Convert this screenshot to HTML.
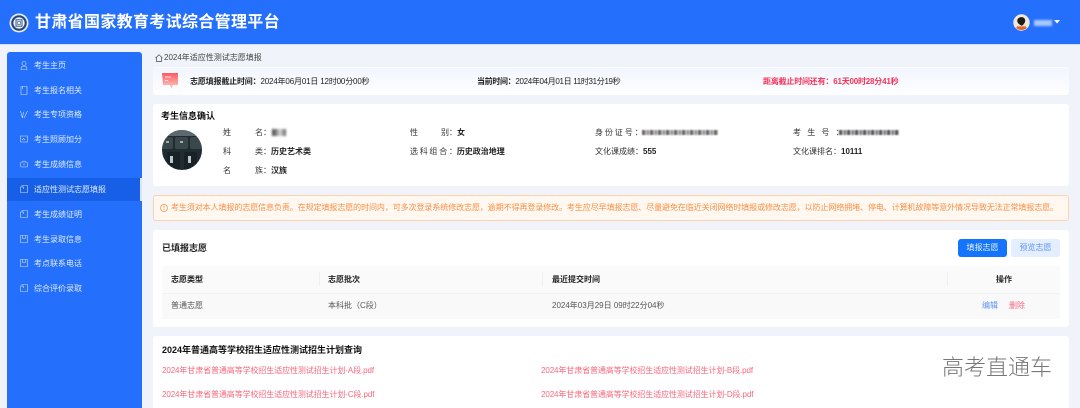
<!DOCTYPE html>
<html lang="zh-CN"><head><meta charset="utf-8"><title>甘肃省国家教育考试综合管理平台</title>
<style>
*{margin:0;padding:0;box-sizing:border-box}
html,body{width:1080px;height:408px;overflow:hidden;background:#f0f3f9;font-family:"Liberation Sans","Noto Sans CJK SC",sans-serif;font-size:8px;color:#333}
#p{position:relative;width:1080px;height:408px;overflow:hidden}
.a{position:absolute;white-space:nowrap;line-height:12px}
.box{position:absolute;background:#fff;border-radius:3px}
.b{font-weight:700;color:#222}
.m{color:#dfeaff;font-size:8px}
.blur{position:absolute;filter:blur(1px)}
svg{position:absolute;overflow:visible}
</style></head><body><div id="p">
<div class="box" style="left:0;top:0;width:1080px;height:44px;background:#2470fd;border-radius:0"></div>
<div class="box" style="left:0;top:44px;width:1080px;height:1px;background:#cfe0ff;border-radius:0"></div>
<svg style="left:9px;top:13px" width="20" height="20" viewBox="0 0 20 20"><circle cx="10" cy="10" r="9.500" fill="#e6ecf5"/><circle cx="10" cy="10" r="7.800" fill="#24457f"/><circle cx="10" cy="10" r="5.600" fill="#f1f4f9"/><rect x="7" y="6.800" width="6" height="6.400" fill="none" stroke="#24457f" stroke-width=".9"/><rect x="8.600" y="8.600" width="2.800" height="2.800" fill="none" stroke="#24457f" stroke-width=".6"/></svg>
<div class="a" style="left:35px;top:13px;font-size:16px;line-height:20px;font-weight:700;color:#fff;letter-spacing:.33px">甘肃省国家教育考试综合管理平台</div>
<svg style="left:1013px;top:14px" width="17" height="17" viewBox="0 0 17 17"><circle cx="8.500" cy="8.500" r="8.200" fill="#f1e8d8"/><path d="M3.200 14a8 8 0 0 0 10.600 0l-1-1.600H4.200z" fill="#e2672e"/><path d="M4.500 5.500c1-2.500 5-3 6.500-1.500 1.500 1 1.500 3.500.5 5-1 1.200-1.500 2.500-3 2.800-1-1-3-1.300-3.500-3-.8-.6-1-2-.5-3.300z" fill="#1e1a17"/></svg>
<div class="blur" style="left:1034px;top:20px;width:18px;height:6px;background:#a9c8ff"></div>
<svg style="left:1054px;top:20px" width="6" height="4"><path d="M0 0h6L3 3.500z" fill="#fff"/></svg>

<div class="box" style="left:7px;top:52px;width:135px;height:356px;background:#2470fd;border-radius:3px 3px 0 0"></div>
<div class="box" style="left:7px;top:178px;width:135px;height:23px;background:#175fe6;border-radius:0"></div>
<div class="box" style="left:140px;top:178px;width:2px;height:23px;background:#dbe7ff;border-radius:0"></div>
<svg style="left:20px;top:61px" width="8" height="9" viewBox="0 0 8 9" fill="none" stroke="#cfe0ff" stroke-width=".6"><circle cx="4" cy="2.500" r="2"/><path d="M1 8.500l.8-3h4.400l.8 3z"/></svg>
<svg style="left:20px;top:86px" width="8" height="9" viewBox="0 0 8 9" fill="none" stroke="#cfe0ff" stroke-width=".6"><path d="M1 .5h6v8H1zM2.500.5v2.500"/></svg>
<svg style="left:20px;top:110px" width="8" height="9" viewBox="0 0 8 9" fill="none" stroke="#cfe0ff" stroke-width=".6"><path d="M.5 1l2 7 1-6M4 8l3.500-7"/></svg>
<svg style="left:20px;top:135px" width="8" height="8" viewBox="0 0 8 8" fill="none" stroke="#cfe0ff" stroke-width=".6"><path d="M.5 1h7v6h-7zM2 5l1.500-1.500L5 5"/></svg>
<svg style="left:20px;top:160px" width="8" height="8" viewBox="0 0 8 8" fill="none" stroke="#cfe0ff" stroke-width=".6"><rect x=".5" y="2" width="7" height="5" rx="1.500"/><path d="M3 2V.8M5 2V.8M4 3.500v2"/></svg>
<svg style="left:20px;top:185px" width="8" height="8" viewBox="0 0 8 8" fill="none" stroke="#cfe0ff" stroke-width=".6"><path d="M2 2V.5h5.500v7H.5V2h3v2"/></svg>
<svg style="left:20px;top:210px" width="8" height="8" viewBox="0 0 8 8" fill="none" stroke="#cfe0ff" stroke-width=".6"><path d="M2 2V.5h5.500v7H.5V2h3v2"/></svg>
<svg style="left:20px;top:235px" width="8" height="8" viewBox="0 0 8 8" fill="none" stroke="#cfe0ff" stroke-width=".6"><path d="M.5.5h7v7h-7zM2.500.5v3h3v-3"/></svg>
<svg style="left:20px;top:259px" width="8" height="8" viewBox="0 0 8 8" fill="none" stroke="#cfe0ff" stroke-width=".6"><path d="M.5.5h7v7h-7zM2.500.5v3h3v-3"/></svg>
<svg style="left:20px;top:284px" width="8" height="8" viewBox="0 0 8 8" fill="none" stroke="#cfe0ff" stroke-width=".6"><path d="M2 2V.5h5.500v7H.5V2h3v2"/></svg>
<div class="a m" style="left:34px;top:60px">考生主页</div>
<div class="a m" style="left:34px;top:85px">考生报名相关</div>
<div class="a m" style="left:34px;top:109px">考生专项资格</div>
<div class="a m" style="left:34px;top:134px">考生照顾加分</div>
<div class="a m" style="left:34px;top:159px">考生成绩信息</div>
<div class="a m" style="left:34px;top:184px">适应性测试志愿填报</div>
<div class="a m" style="left:34px;top:209px">考生成绩证明</div>
<div class="a m" style="left:34px;top:234px">考生录取信息</div>
<div class="a m" style="left:34px;top:258px">考点联系电话</div>
<div class="a m" style="left:34px;top:283px">综合评价录取</div>

<svg style="left:155px;top:54px" width="8" height="8" viewBox="0 0 8 8" fill="none" stroke="#444" stroke-width=".7"><path d="M.5 4L4 .8 7.500 4M1.500 3.500v4h5v-4"/></svg>
<div class="a" style="left:164px;top:52px;color:#444">2024年适应性测试志愿填报</div>

<div class="box" style="left:153px;top:67px;width:916px;height:28px;background:linear-gradient(#f1f5fe,#fff);border-top:1px solid #fbfcff"></div>
<svg style="left:161px;top:73px" width="18" height="17" viewBox="0 0 18 17"><defs><linearGradient id="g" x1="0" y1="0" x2="0" y2="1"><stop offset="0" stop-color="#fb5a5f"/><stop offset="1" stop-color="#ffd0c8"/></linearGradient></defs><path d="M1 0h16v12h-5l-1.500 4-1.500-4H2z" fill="url(#g)"/><path d="M4 4h6M4 7.500h3" stroke="#fff" stroke-width=".8"/></svg>
<div class="a" style="left:190px;top:76px;color:#222;letter-spacing:-.17px"><b>志愿填报截止时间：</b>2024年06月01日 12时00分00秒</div>
<div class="a" style="left:477px;top:76px;color:#222;letter-spacing:-.33px"><b>当前时间：</b>2024年04月01日 11时31分19秒</div>
<div class="a" style="left:763px;top:76px;color:#f5315a;font-weight:700;letter-spacing:-.2px">距离截止时间还有：61天00时28分41秒</div>

<div class="box" style="left:153px;top:104px;width:916px;height:82px"></div>
<div class="a b" style="left:161px;top:110px;font-size:9px;color:#111">考生信息确认</div>
<svg style="left:162px;top:130px" width="40" height="40" viewBox="0 0 40 40"><defs><clipPath id="c"><circle cx="20" cy="20" r="20"/></clipPath></defs><g clip-path="url(#c)"><rect width="40" height="40" fill="#1f2c31"/><rect width="40" height="6" fill="#5c6a6e"/><rect x="-2" y="7" width="13" height="12" rx="2" fill="#3a484c"/><rect x="13" y="7" width="13" height="12" rx="2" fill="#3a484c"/><rect x="28" y="7" width="14" height="12" rx="2" fill="#3a484c"/><rect x="5" y="22" width="13" height="18" rx="2" fill="#172126"/><rect x="22" y="22" width="13" height="18" rx="2" fill="#172126"/><rect x="8" y="26" width="3" height="7" fill="#b9c9c9"/><rect x="26" y="26" width="3" height="7" fill="#b9c9c9"/><rect x="18" y="11" width="3" height="2" fill="#9fb0b0"/><rect x="4" y="11" width="3" height="2" fill="#9fb0b0"/></g></svg>
<div class="a" style="left:223px;top:127px">姓</div><div class="a" style="left:255px;top:127px">名：</div>
<div class="a" style="left:223px;top:146px">科</div><div class="a" style="left:255px;top:146px">类：<b style="color:#222">历史艺术类</b></div>
<div class="a" style="left:223px;top:165px">名</div><div class="a" style="left:255px;top:165px">族：<b style="color:#222">汉族</b></div>
<div class="blur" style="left:272px;top:129px;width:14px;height:7px;background:linear-gradient(90deg,#444,#999 40%,#ddd 55%,#666)"></div>
<div class="a" style="left:410px;top:127px">性</div><div class="a" style="left:441px;top:127px">别：<b style="color:#222">女</b></div>
<div class="a" style="left:410px;top:146px;letter-spacing:1.700px">选科组合<span style="letter-spacing:0">：</span><b style="color:#222;letter-spacing:0">历史政治地理</b></div>
<div class="a" style="left:595px;top:127px;letter-spacing:1.900px">身份证号<span style="letter-spacing:0">：</span></div>
<div class="blur" style="left:642px;top:130px;width:76px;height:5px;background:repeating-linear-gradient(90deg,#666 0 3px,#c9b9b0 3px 5px,#8a93a5 5px 7px,#e0e0e0 7px 8px);filter:blur(.7px)"></div>
<div class="a" style="left:595px;top:146px">文化课成绩：<b style="color:#222">555</b></div>
<div class="a" style="left:793px;top:127px;letter-spacing:6.200px">考生号<span style="letter-spacing:0">：</span></div>
<div class="blur" style="left:839px;top:130px;width:60px;height:5px;background:repeating-linear-gradient(90deg,#555 0 3px,#b8bcc8 3px 5px,#777 5px 7px,#ddd 7px 8px);filter:blur(.7px)"></div>
<div class="a" style="left:793px;top:146px">文化课排名：<b style="color:#222">10111</b></div>

<div class="box" style="left:153px;top:195px;width:916px;height:26px;background:#fef8f1;border:1px solid #fbd3ac"></div>
<svg style="left:160px;top:204px" width="8" height="8" viewBox="0 0 8 8" fill="none" stroke="#f78a3c" stroke-width=".7"><circle cx="4" cy="4" r="3.500"/><path d="M4 2v2.500M4 5.300v.8"/></svg>
<div class="a" style="left:171px;top:202px;color:#f98f45;letter-spacing:-.08px">考生须对本人填报的志愿信息负责。在规定填报志愿的时间内，可多次登录系统修改志愿，逾期不得再登录修改。考生应尽早填报志愿、尽量避免在临近关闭网络时填报或修改志愿，以防止网络拥堵、停电、计算机故障等意外情况导致无法正常填报志愿。</div>

<div class="box" style="left:153px;top:230px;width:916px;height:97px"></div>
<div class="a b" style="left:162px;top:242px;font-size:9px">已填报志愿</div>
<div class="box" style="left:958px;top:239px;width:49px;height:18px;background:#1474fb;color:#e8f1ff;text-align:center;line-height:18px;font-size:8px">填报志愿</div>
<div class="box" style="left:1011px;top:239px;width:49px;height:18px;background:#e3eeff;color:#5f95f5;text-align:center;line-height:18px;font-size:8px">预览志愿</div>
<div class="box" style="left:162px;top:266px;width:898px;height:27px;background:#fafafa;border-radius:0"></div>
<div class="box" style="left:162px;top:293px;width:898px;height:1px;background:#f2f2f2;border-radius:0"></div>
<div class="box" style="left:162px;top:294px;width:898px;height:25px;background:#f9f9f9;border-radius:0"></div>
<div class="box" style="left:319px;top:272px;width:1px;height:14px;background:#f0f0f0;border-radius:0"></div>
<div class="box" style="left:542px;top:272px;width:1px;height:14px;background:#f0f0f0;border-radius:0"></div>
<div class="box" style="left:947px;top:272px;width:1px;height:14px;background:#f0f0f0;border-radius:0"></div>
<div class="a b" style="left:171px;top:274px">志愿类型</div>
<div class="a b" style="left:328px;top:274px">志愿批次</div>
<div class="a b" style="left:552px;top:274px">最近提交时间</div>
<div class="a b" style="left:996px;top:274px">操作</div>
<div class="a" style="left:171px;top:300px;color:#555">普通志愿</div>
<div class="a" style="left:328px;top:300px;color:#555">本科批（C段）</div>
<div class="a" style="left:552px;top:300px;color:#555">2024年03月29日 09时22分04秒</div>
<div class="a" style="left:982px;top:300px;color:#5c93f7">编辑</div>
<div class="a" style="left:1009px;top:300px;color:#f8687f">删除</div>

<div class="box" style="left:153px;top:336px;width:916px;height:72px;border-radius:3px 3px 0 0"></div>
<div class="a b" style="left:162px;top:344px;font-size:9px;color:#111">2024年普通高等学校招生适应性测试招生计划查询</div>
<div class="a" style="left:162px;top:365px;color:#f8677e;letter-spacing:-.1px">2024年甘肃省普通高等学校招生适应性测试招生计划-A段.pdf</div>
<div class="a" style="left:162px;top:389px;color:#f8677e;letter-spacing:-.1px">2024年甘肃省普通高等学校招生适应性测试招生计划-C段.pdf</div>
<div class="a" style="left:541px;top:365px;color:#f8677e;letter-spacing:-.1px">2024年甘肃省普通高等学校招生适应性测试招生计划-B段.pdf</div>
<div class="a" style="left:541px;top:389px;color:#f8677e;letter-spacing:-.1px">2024年甘肃省普通高等学校招生适应性测试招生计划-D段.pdf</div>
<div class="a" style="left:942px;top:355px;font-size:22px;line-height:26px;color:#777;font-weight:300">高考直通车</div>
</div></body></html>
